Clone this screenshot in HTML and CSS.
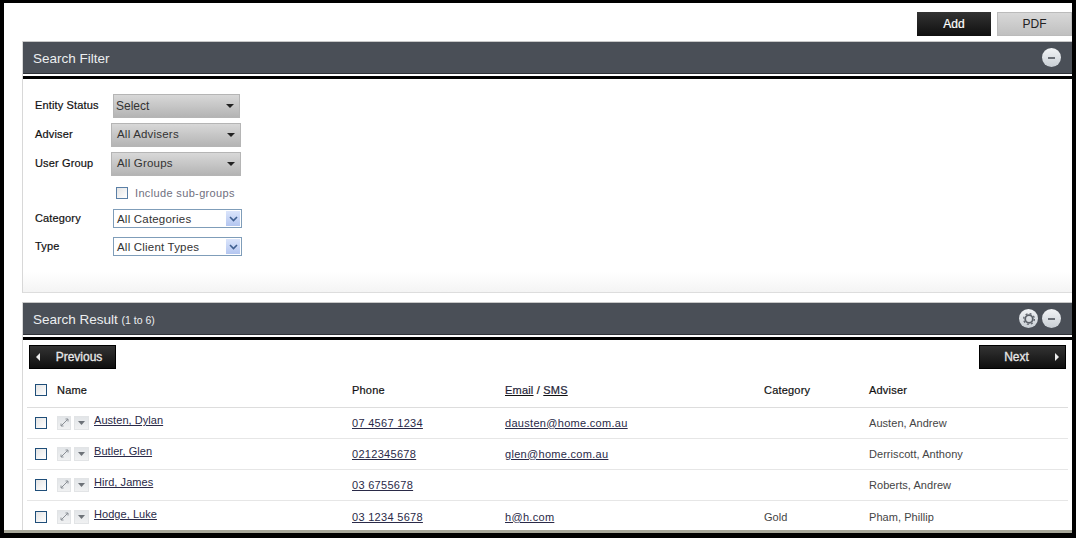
FILE: index.html
```html
<!DOCTYPE html>
<html lang="en">
<head>
    <meta charset="UTF-8">
    <meta name="viewport" content="width=device-width, initial-scale=1.0">
    <title>Search</title>
    <link rel="stylesheet" href="styles.css">
</head>
<body>

<div class="frame">
    <div class="actions">
        <button class="btn btn-dark">Add</button>
        <button class="btn btn-light">PDF</button>
    </div>

    <div class="panel filter-panel">
        <div class="panel-head">
            <span class="panel-title">Search Filter</span>
            <span class="round-btn"><span class="minus"></span></span>
        </div>
        <form class="filter-body">
            <div class="field field-status">
                <label>Entity Status</label>
                <div class="grey-select status-select">Select<span class="caret"></span></div>
            </div>
            <div class="field field-adviser">
                <label>Adviser</label>
                <div class="grey-select wide-select">All Advisers<span class="caret"></span></div>
            </div>
            <div class="field field-group">
                <label>User Group</label>
                <div class="grey-select wide-select">All Groups<span class="caret"></span></div>
            </div>
            <div class="field-sub">
                <span class="check check-small"></span>
                <span>Include sub-groups</span>
            </div>
            <div class="field field-category">
                <label>Category</label>
                <div class="list-select">All Categories
                    <span class="list-arrow"><svg width="9" height="6" viewBox="0 0 9 6"><path d="M1 1l3.500 3.500L8 1" fill="none" stroke="#3f5f8f" stroke-width="1.600"/></svg></span>
                </div>
            </div>
            <div class="field field-type">
                <label>Type</label>
                <div class="list-select list-select-short">All Client Types
                    <span class="list-arrow"><svg width="9" height="6" viewBox="0 0 9 6"><path d="M1 1l3.500 3.500L8 1" fill="none" stroke="#3f5f8f" stroke-width="1.600"/></svg></span>
                </div>
            </div>
        </form>
    </div>

    <div class="panel result-panel">
        <div class="panel-head">
            <span class="panel-title">Search Result <small>(1 to 6)</small></span>
            <span class="round-btn">
                <svg width="14" height="14" viewBox="0 0 14 14"><circle cx="7" cy="7" r="3.800" fill="none" stroke="#5b6068" stroke-width="1.800"/><circle cx="7" cy="7" r="5.400" fill="none" stroke="#5b6068" stroke-width="1.200" stroke-dasharray="2 2.240"/></svg>
            </span>
            <span class="round-btn"><span class="minus"></span></span>
        </div>

        <div class="pager">
            <button class="btn btn-pager"><span class="arrow-left"></span>Previous</button>
            <button class="btn btn-pager btn-next">Next<span class="arrow-right"></span></button>
        </div>

        <table class="results">
            <colgroup>
                <col class="col-name">
                <col class="col-phone">
                <col class="col-email">
                <col class="col-category">
                <col>
            </colgroup>
            <thead>
                <tr>
                    <th><span class="check"></span><span class="th-name">Name</span></th>
                    <th>Phone</th>
                    <th><a href="#">Email</a> / <a href="#">SMS</a></th>
                    <th>Category</th>
                    <th>Adviser</th>
                </tr>
            </thead>
            <tbody id="rows"></tbody>
        </table>
    </div>
</div>

<script>
    const clients = [
        { name: 'Austen, Dylan', phone: '07 4567 1234', email: 'dausten@home.com.au', category: '', adviser: 'Austen, Andrew' },
        { name: 'Butler, Glen', phone: '0212345678', email: 'glen@home.com.au', category: '', adviser: 'Derriscott, Anthony' },
        { name: 'Hird, James', phone: '03 6755678', email: '', category: '', adviser: 'Roberts, Andrew' },
        { name: 'Hodge, Luke', phone: '03 1234 5678', email: 'h@h.com', category: 'Gold', adviser: 'Pham, Phillip' }
    ];

    const expandIcon = '<svg width="9" height="9" viewBox="0 0 9 9"><path d="M1 8L8 1M5.500 1H8v2.500M1 5.500V8h2.500" fill="none" stroke="#8b9096" stroke-width="1"/></svg>';
    const downIcon = '<svg width="7" height="4" viewBox="0 0 7 4"><path d="M0 0h7L3.500 4z" fill="#6d7278"/></svg>';

    const rows = document.getElementById('rows');
    clients.forEach(client => {
        const row = document.createElement('tr');
        row.innerHTML = `
            <td>
                <div class="name-cell">
                    <span class="check"></span>
                    <span class="mini-btn">${expandIcon}</span>
                    <span class="mini-btn">${downIcon}</span>
                    <a href="#" class="name-link">${client.name}</a>
                </div>
            </td>
            <td><a href="#">${client.phone}</a></td>
            <td>${client.email ? `<a href="#">${client.email}</a>` : ''}</td>
            <td class="muted">${client.category}</td>
            <td class="muted">${client.adviser}</td>
        `;
        rows.appendChild(row);
    });
</script>

</body>
</html>
```

FILE: styles.css
```css
html, body {
    margin: 0;
    padding: 0;
    background-color: #000;
}
body {
    font-family: "Liberation Sans", Arial, sans-serif;
    font-size: 12px;
    color: #111;
    width: 1076px;
    height: 538px;
    overflow: hidden;
}
a {
    color: #2a2a48;
}
.frame {
    box-sizing: border-box;
    width: 1068px;
    height: 530px;
    margin: 3px 0 0 4px;
    background-color: #fff;
    padding: 9px 0 0 18px;
    overflow: hidden;
    border-bottom: 3px solid #a8a89a;
}
.actions {
    display: flex;
    justify-content: flex-end;
    gap: 6px;
    height: 24px;
    margin-bottom: 5px;
}
.btn {
    font-family: "Liberation Sans", Arial, sans-serif;
    font-size: 12px;
    width: 74px;
    height: 24px;
    padding: 0;
    border: none;
    text-align: center;
}
.btn-dark {
    color: #fff;
    -webkit-text-stroke: 0.2px #fff;
    background: linear-gradient(#333, #0f0f0f);
}
.btn-light {
    width: 75px;
    color: #222;
    border: 1px solid #bbb;
    background: linear-gradient(#d8d8d8, #c0c0c0);
}
.panel {
    border-left: 1px solid #d8d8d8;
}
.panel-head {
    display: flex;
    align-items: center;
    justify-content: flex-end;
    gap: 4px;
    height: 31px;
    padding-right: 11px;
    background-color: #4a4f57;
    border-top: 1px solid #c8c8c8;
    border-bottom: 1px solid #2d3036;
    box-sizing: content-box;
    box-shadow: 0 2px 0 #fff, 0 5px 0 #000;
    margin-bottom: 5px;
}
.panel-title {
    margin-right: auto;
    margin-left: 10px;
    padding-top: 1px;
    font-size: 13.500px;
    color: #eceef0;
}
.panel-title small {
    font-size: 10.500px;
}
.round-btn {
    display: flex;
    align-items: center;
    justify-content: center;
    width: 19px;
    height: 19px;
    border-radius: 50%;
    background: linear-gradient(#f2f4f6, #c8ced4);
}
.minus {
    width: 7px;
    height: 2px;
    background-color: #6a6f76;
}
.filter-panel {
    height: 252px;
    border-bottom: 1px solid #ddd;
    background: linear-gradient(#fff 92%, #f4f4f4);
    box-sizing: border-box;
    margin-bottom: 9px;
}
.filter-body {
    padding: 15px 0 0 12px;
}
.field {
    display: flex;
    align-items: center;
    color: #111;
}
.field label {
    width: 77px;
    font-size: 11px;
    letter-spacing: 0.150px;
    -webkit-text-stroke: 0.2px #111;
}
.field-status {
    height: 24px;
    margin-bottom: 5px;
}
.field-status label {
    width: 78px;
    margin-top: -2px;
}
.field-adviser,
.field-group {
    height: 24px;
}
.field-adviser {
    margin-bottom: 5px;
}
.field-group label,
.field-adviser label {
    width: 76px;
    margin-top: -2px;
}
.grey-select {
    position: relative;
    box-sizing: border-box;
    height: 24px;
    line-height: 21px;
    padding-left: 5px;
    font-size: 11.500px;
    color: #333;
    border: 1px solid #b5b5b5;
    background: linear-gradient(#d8d8d8, #b4b4b4);
    letter-spacing: 0.200px;
}
.status-select {
    width: 127px;
    padding-left: 2px;
    font-size: 12px;
    letter-spacing: 0;
    line-height: 22px;
}
.wide-select {
    width: 130px;
}
.caret {
    position: absolute;
    right: 5px;
    top: 9px;
    width: 0;
    height: 0;
    border-left: 4px solid transparent;
    border-right: 4px solid transparent;
    border-top: 4px solid #222;
}
.field-sub {
    display: flex;
    align-items: center;
    gap: 7px;
    height: 12px;
    margin: 11px 0 10px 81px;
    color: #6f6f80;
    font-size: 11px;
    letter-spacing: 0.350px;
}
.check {
    display: inline-block;
    box-sizing: border-box;
    width: 12px;
    height: 12px;
    border: 1px solid #1f4e79;
    background: linear-gradient(135deg, #e4e4e4, #fff);
}
.check-small {
    border-color: #5a7fa6;
}
.list-select {
    display: flex;
    align-items: center;
    justify-content: space-between;
    box-sizing: border-box;
    width: 129px;
    height: 19px;
    padding: 0 1px 0 3px;
    border: 1px solid #7f9db9;
    font-size: 11.500px;
    color: #333;
    letter-spacing: 0.200px;
    background-color: #fff;
}
.list-select-short {
    height: 19px;
}
.field-category {
    height: 19px;
    margin-bottom: 9px;
}
.field-type {
    height: 19px;
}
.field-category label,
.field-type label {
    width: 78px;
    margin-top: -2px;
}
.list-arrow {
    display: flex;
    align-items: center;
    justify-content: center;
    width: 14px;
    height: 15px;
    background: linear-gradient(#dbe5fb, #b4c6f0);
}
.pager {
    display: flex;
    justify-content: space-between;
    padding: 0 6px 0 6px;
    margin-top: 10px;
}
.btn-pager {
    position: relative;
    width: 87px;
    height: 24px;
    color: #e8e8e8;
    -webkit-text-stroke: 0.3px #e8e8e8;
    border: 1px solid #000;
    background: linear-gradient(#333, #0f0f0f);
    padding-left: 13px;
}
.btn-next {
    padding: 0 12px 0 0;
}
.arrow-left,
.arrow-right {
    position: absolute;
    top: 7px;
    width: 0;
    height: 0;
    border-top: 4px solid transparent;
    border-bottom: 4px solid transparent;
}
.arrow-left {
    left: 6px;
    border-right: 4px solid #eee;
}
.arrow-right {
    right: 6px;
    border-left: 4px solid #eee;
}
.results {
    width: 1041px;
    margin: 9px 0 0 4px;
    border-collapse: collapse;
    table-layout: fixed;
    font-size: 11px;
    letter-spacing: 0.300px;
}
.col-name {
    width: 325px;
}
.col-phone {
    width: 153px;
}
.col-email {
    width: 259px;
}
.col-category {
    width: 105px;
}
.results th {
    height: 29px;
    padding: 0 0 5px;
    font-size: 11px;
    font-weight: 400;
    text-align: left;
    color: #111;
    letter-spacing: 0.200px;
    -webkit-text-stroke: 0.2px #111;
    border-bottom: 1px solid #ddd;
    box-sizing: border-box;
}
.results th:first-child {
    padding-left: 8px;
}
.results th .check {
    vertical-align: middle;
    margin: 0 10px 0 0;
}
.th-name {
    vertical-align: -1px;
}
.results td {
    height: 30px;
    padding: 0;
    color: #444;
    border-bottom: 1px solid #e6e6e6;
    vertical-align: middle;
}
.results tr:last-child td {
    border-bottom: none;
    padding-top: 1px;
}
.name-cell {
    display: flex;
    align-items: center;
    padding-left: 8px;
}
.name-cell .check {
    margin-right: 10px;
}
.mini-btn {
    display: flex;
    align-items: center;
    justify-content: center;
    width: 15px;
    height: 14px;
    margin-right: 2px;
    background: linear-gradient(#e2e5e8, #f0f1f2);
    border: 1px solid #e2e4e6;
    box-sizing: border-box;
}
.mini-btn:nth-child(2) {
    width: 14px;
    margin-right: 3px;
}
.name-link {
    margin: -5px 0 0 3px;
    letter-spacing: 0.050px;
}
.muted {
    color: #707070;
    letter-spacing: 0.050px;
}
```
